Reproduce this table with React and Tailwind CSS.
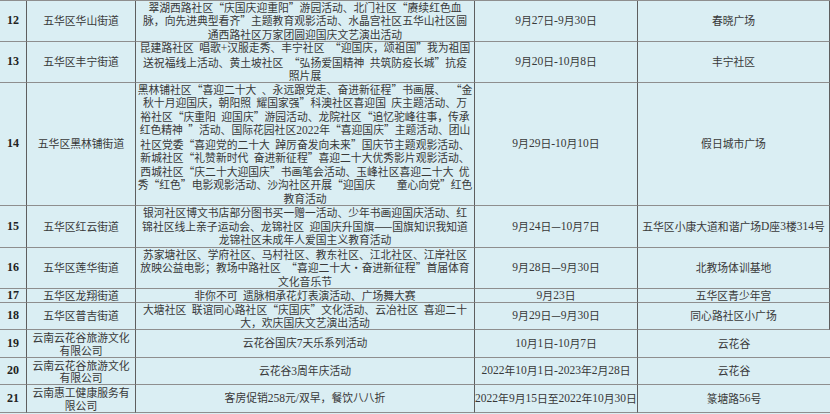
import React from "react";

const rows = [
  {
    n: "12",
    a: ["五华区华山街道"],
    c: [
      "翠湖西路社区“庆国庆迎重阳”游园活动、北门社区“赓续红色血",
      "脉，向先进典型看齐”主题教育观影活动、水晶宫社区五华山社区圆",
      "通西路社区万家团圆迎国庆文艺演出活动",
    ],
    d: "9月27日-9月30日",
    e: "春晓广场",
  },
  {
    n: "13",
    a: ["五华区丰宁街道"],
    c: [
      "昆建路社区 唱歌+汉服走秀、丰宁社区 “迎国庆，颂祖国”我为祖国",
      "送祝福线上活动、黄土坡社区 “弘扬爱国精神 共筑防疫长城”抗疫",
      "照片展",
    ],
    d: "9月20日-10月8日",
    e: "丰宁社区",
  },
  {
    n: "14",
    a: ["五华区黑林铺街道"],
    c: [
      "黑林铺社区“喜迎二十大 、永远跟党走、奋进新征程”书画展、 “金",
      "秋十月迎国庆，朝阳照 耀国家强”科澳社区喜迎国 庆主题活动、万",
      "裕社区“庆重阳 迎国庆”游园活动、龙院社区“追忆驼峰往事，传承",
      "红色精神 ”活动、国际花园社区2022年“喜迎国庆”主题活动、团山",
      "社区党委“喜迎党的二十大 踔厉奋发向未来”国庆节主题观影活动、",
      "新城社区“礼赞新时代 奋进新征程”喜迎二十大优秀影片观影活动、",
      "西城社区“庆二十大迎国庆”书画笔会活动、玉峰社区喜迎二十大 优",
      "秀“红色”电影观影活动、沙沟社区开展“迎国庆    童心向党”红色",
      "教育活动",
    ],
    d: "9月29日-10月10日",
    e: "假日城市广场",
  },
  {
    n: "15",
    a: ["五华区红云街道"],
    c: [
      "银河社区博文书店部分图书买一赠一活动、少年书画迎国庆活动、红",
      "锦社区线上亲子运动会、龙锦社区 迎国庆升国旗——国旗知识我知道",
      "龙锦社区未成年人爱国主义教育活动",
    ],
    d: "9月24日—10月7日",
    e: "五华区小康大道和谐广场D座3楼314号",
  },
  {
    n: "16",
    a: ["五华区莲华街道"],
    c: [
      "苏家塘社区、学府社区、马村社区、教东社区、江北社区、江岸社区",
      "放映公益电影；教场中路社区 “喜迎二十大·奋进新征程”首届体育",
      "文化音乐节",
    ],
    d: "9月28日—9月30日",
    e: "北教场体训基地",
  },
  {
    n: "17",
    a: ["五华区龙翔街道"],
    c: ["非你不可 遗脉相承花灯表演活动、广场舞大赛"],
    d: "9月23日",
    e: "五华区青少年宫",
  },
  {
    n: "18",
    a: ["五华区普吉街道"],
    c: [
      "大塘社区 联谊同心路社区“庆国庆”文化活动、云冶社区 喜迎二十",
      "大，欢庆国庆文艺演出活动",
    ],
    d: "9月29日—9月30日",
    e: "同心路社区小广场",
  },
  {
    n: "19",
    a: ["云南云花谷旅游文化", "有限公司"],
    c: ["云花谷国庆7天乐系列活动"],
    d: "10月1日-10月7日",
    e: "云花谷",
  },
  {
    n: "20",
    a: ["云南云花谷旅游文化", "有限公司"],
    c: ["云花谷3周年庆活动"],
    d: "2022年10月1日-2023年2月28日",
    e: "云花谷",
  },
  {
    n: "21",
    a: ["云南惠工健康服务有", "限公司"],
    c: ["客房促销258元/双早，餐饮八八折"],
    d: "2022年9月15日至2022年10月30日",
    e: "篆塘路56号",
  },
];

const LATIN = /^[0-9A-Za-z+\-/]+$/;

function Mixed({ text }) {
  const parts = text.split(/([0-9A-Za-z+\-/]+|“|”| )/);
  return (
    <>
      {parts.map((p, i) => {
        if (p === "") return null;
        if (LATIN.test(p))
          return (
            <span key={i} className="font-['Liberation_Serif',serif] text-[11.5px]">
              {p}
            </span>
          );
        if (p === "“")
          return (
            <span key={i} className="inline-block w-[1em] text-right">
              “
            </span>
          );
        if (p === "”")
          return (
            <span key={i} className="inline-block w-[1em] text-left">
              ”
            </span>
          );
        if (p === " ")
          return <span key={i} className="inline-block w-[0.5em]"></span>;
        return <React.Fragment key={i}>{p}</React.Fragment>;
      })}
    </>
  );
}

function Lines({ lines }) {
  return (
    <div>
      {lines.map((l, i) => (
        <div key={i}>
          <Mixed text={l} />
        </div>
      ))}
    </div>
  );
}

const cell =
  "flex items-center justify-center text-center whitespace-nowrap border-b border-r border-b-[#8e8e8e] border-r-[#5e5e5e]";
const cellLastNoRight =
  "flex items-center justify-center text-center whitespace-nowrap border-b border-b-[#8e8e8e]";

export default function App() {
  return (
    <div className="w-[830px] h-[414px] overflow-hidden bg-[#daeef3]">
      <div className="grid grid-cols-[27px_109px_339px_163px_192px] grid-rows-[41px_41px_123px_42px_41px_14px_27px_28px_27px_28px] border-t border-t-[#8e8e8e] text-[10.8px] leading-[13.5px] text-[#383838] font-['Noto_Sans_CJK_SC',sans-serif]">
        {rows.map((r, idx) => (
          <React.Fragment key={r.n}>
            <div className={cell}>
              <span className="font-['Liberation_Serif',serif] font-bold text-[12px] text-[#222]">
                {r.n}
              </span>
            </div>
            <div className={cell}>
              <div className={r.a.length > 1 ? "leading-[12.5px]" : ""}>
                {r.a.map((l, i) => (
                  <div key={i}>{l}</div>
                ))}
              </div>
            </div>
            <div className={cell}>
              <Lines lines={r.c} />
            </div>
            <div className={cell}>
              <Mixed text={r.d} />
            </div>
            <div className={idx < 7 ? cell : cellLastNoRight}>
              <Mixed text={r.e} />
            </div>
          </React.Fragment>
        ))}
      </div>
    </div>
  );
}
